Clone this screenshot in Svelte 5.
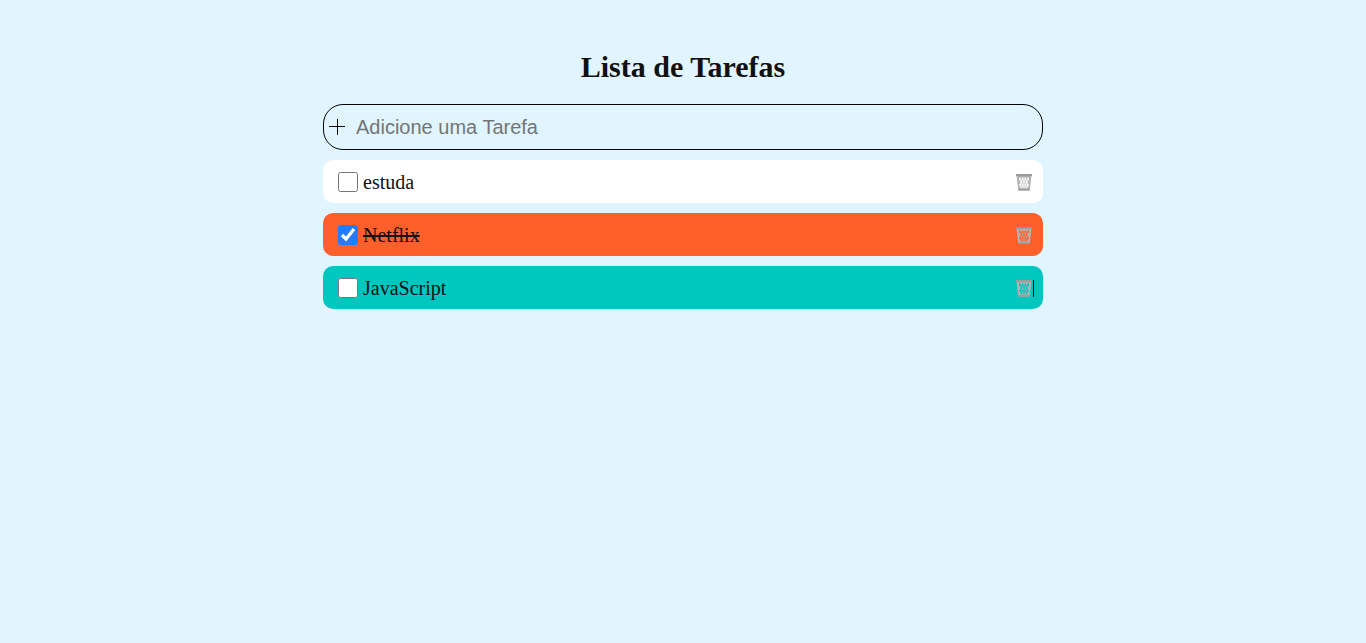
<script>
  let tasks = $state([
    { id: 1, name: 'estuda', done: false, color: '#ffffff' },
    { id: 2, name: 'Netflix', done: true, color: '#ff602b' },
    { id: 3, name: 'JavaScript', done: false, color: '#00c6c0' }
  ]);
  let draft = $state('');
  let caretId = $state(3);

  // Staggered diamond openings cut through the basket wall.
  const openings = [
    [4, 4.9], [6.7, 4.9], [9.3, 4.9], [12, 4.9],
    [5.3, 7.9], [8, 7.9], [10.7, 7.9],
    [4.2, 10.9], [6.7, 10.9], [9.3, 10.9], [11.8, 10.9],
    [5.4, 13.3], [8, 13.3], [10.6, 13.3]
  ];
  const basket =
    'M.6 2h14.8l-1.6 14.5H2.2z' +
    openings
      .map(([x, y], i) => {
        const h = i > 10 ? 1.2 : 2.1;
        return `M${x} ${y - h}l1.2 ${h}-1.2 ${h}-1.2-${h}z`;
      })
      .join('');

  function add(event) {
    event.preventDefault();
    if (!draft.trim()) return;
    tasks.push({ id: Date.now(), name: draft.trim(), done: false, color: '#ffffff' });
    draft = '';
  }

  function remove(id) {
    tasks = tasks.filter((task) => task.id !== id);
  }
</script>

<main>
  <h1>Lista de Tarefas</h1>
  <form onsubmit={add}>
    <svg class="plus" viewBox="0 0 16 16" aria-hidden="true"><path d="M8.5 0v16M0 7.5h16" /></svg>
    <input class="entry" type="text" placeholder="Adicione uma Tarefa" aria-label="Adicione uma Tarefa" bind:value={draft} />
  </form>
  <ul>
    {#each tasks as task (task.id)}
      <li style:background-color={task.color}>
        <input id="task-{task.id}" type="checkbox" bind:checked={task.done} />
        <label for="task-{task.id}" class:done={task.done}>{task.name}</label>
        <button type="button" class:caret={task.id === caretId} aria-label="Excluir {task.name}" onclick={() => remove(task.id)}>
          <svg viewBox="0 0 16 17" aria-hidden="true">
            <path class="basket" fill-rule="evenodd" d={basket} />
            <path class="rim" d="M0 0h16v2.2H0zM2.3 14.8h11.4l-.2 1.7H2.5z" />
          </svg>
        </button>
      </li>
    {/each}
  </ul>
</main>

<style>
  :global(body) { background: #e0f5ff; }
  main {
    box-sizing: border-box;
    max-width: 720px;
    margin: 0 auto;
    padding-top: 50px;
    font-family: "Liberation Serif", "Times New Roman", serif;
    color: #111;
  }
  h1 { margin: 0 0 20px; font-size: 30px; line-height: 34px; text-align: center; }
  form {
    box-sizing: border-box;
    display: flex;
    align-items: center;
    gap: 11px;
    height: 46px;
    padding: 0 20px 0 5px;
    border: 1px solid #000;
    border-radius: 20px;
  }
  .plus { width: 16px; height: 16px; fill: none; stroke: #000; flex: none; }
  .entry {
    flex: 1;
    min-width: 0;
    padding: 0;
    border: 0;
    outline: 0;
    background: transparent;
    font: 20px "Liberation Sans", Arial, sans-serif;
  }
  .entry::placeholder { color: #757575; }
  ul { display: grid; gap: 10px; margin: 10px 0 0; padding: 0; list-style: none; }
  li {
    display: flex;
    align-items: center;
    box-sizing: border-box;
    padding: 10px 11px 9px 15px;
    border-radius: 10px;
  }
  li input { width: 20px; height: 20px; margin: 0 5px 0 0; accent-color: #267aff; }
  label { flex: 1; font-size: 20px; line-height: 24px; }
  .done { text-decoration: line-through; }
  button { position: relative; display: flex; padding: 0; border: 0; background: none; cursor: pointer; }
  button svg { width: 16px; height: 17px; }
  .caret::after {
    content: "";
    position: absolute;
    top: 0;
    bottom: 0;
    left: 17px;
    border-left: 1px solid #000;
  }
  .basket { fill: #b4b4b4; }
  .rim { fill: #9c9c9c; }
</style>
